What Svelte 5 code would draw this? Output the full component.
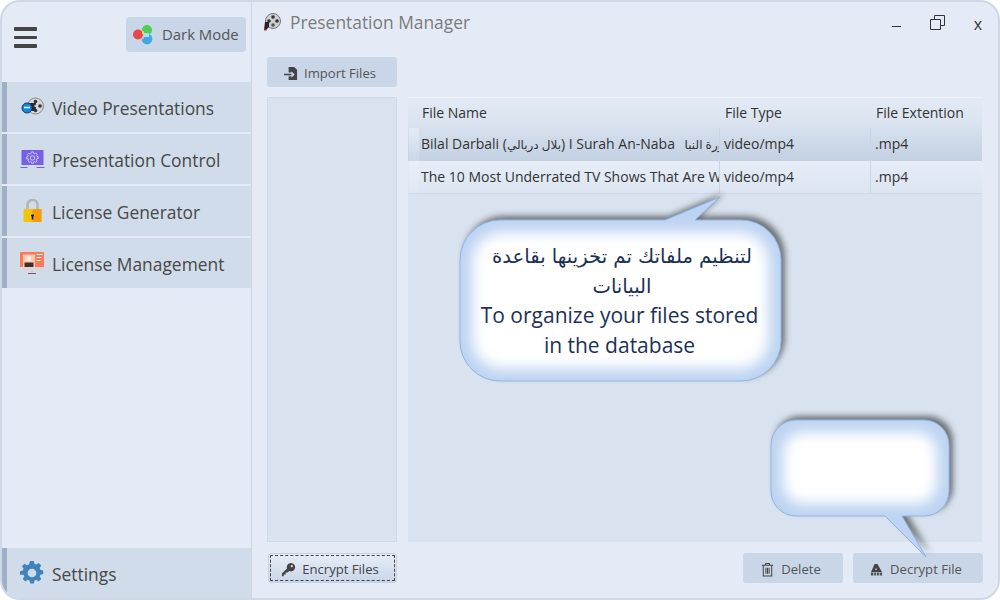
<script>
  const nav = [
    { id: 'video', label: 'Video Presentations' },
    { id: 'control', label: 'Presentation Control' },
    { id: 'lock', label: 'License Generator' },
    { id: 'monitor', label: 'License Management' }
  ];
  const bubbleA = 'M500 220 H665 L720 197 L695 220 H741 A40 40 0 0 1 781 260 V341 A40 40 0 0 1 741 381 H500 A40 40 0 0 1 460 341 V260 A40 40 0 0 1 500 220 Z';
  const bubbleB = 'M796 420 H924 A25 25 0 0 1 949 445 V491 A25 25 0 0 1 924 516 H902 L926 557 L885 516 H796 A25 25 0 0 1 771 491 V445 A25 25 0 0 1 796 420 Z';
  const gear = 'M10.3 1h3.4l.5 2.6 1.7.7 2.2-1.5 2.4 2.4-1.5 2.2.7 1.7 2.6.5v3.4l-2.6.5-.7 1.7 1.5 2.2-2.4 2.4-2.2-1.5-1.7.7-.5 2.6h-3.4l-.5-2.6-1.7-.7-2.2 1.5-2.4-2.4 1.5-2.2-.7-1.7L1 13.7v-3.4l2.6-.5.7-1.7-1.5-2.2 2.4-2.4 2.2 1.5 1.7-.7z';
</script>

<div class="window">
  <aside class="side">
    <div class="side-top">
      <div class="burger"><i></i><i></i><i></i></div>
      <button class="dark">
        <svg class="ic-dark" viewBox="0 0 20 20">
          <circle cx="5" cy="9.5" r="5" fill="#e8474c" />
          <circle cx="14" cy="5" r="5" fill="#4fce53" />
          <circle cx="14" cy="14" r="5.4" fill="#40a9e0" />
          <rect x="10" y="8" width="6" height="4" fill="#a8e4ee" />
          <rect x="9" y="11" width="2" height="3" fill="#f0a8c0" />
          <rect x="9" y="6" width="2" height="3" fill="#f2cf70" />
        </svg>
        <span class="dark-label">Dark Mode</span>
      </button>
    </div>
    <nav class="nav">
      {#each nav as item}
        <div class="item">
          <span class="ico">
            {#if item.id === 'video'}
              <svg class="ic" viewBox="0 0 24 24">
                <circle cx="15.5" cy="11" r="8" fill="#d6d6d6" stroke="#8a8a8a" />
                <rect x="8" y="8" width="8" height="8" fill="#2a2a30" />
                <circle cx="15.5" cy="6.5" r="1.8" fill="#333" />
                <circle cx="20" cy="11" r="1.8" fill="#333" />
                <circle cx="15.5" cy="15.5" r="1.8" fill="#333" />
                <circle cx="15.5" cy="11" r="1.2" fill="#ccc" />
                <circle cx="7" cy="13" r="5" fill="#1586d8" stroke="#0a3f78" />
                <path d="M4 12.5h6" stroke="#fff" stroke-width="1.4" />
              </svg>
            {:else if item.id === 'control'}
              <svg class="ic-wide" viewBox="0 0 26 24">
                <rect x="2.5" y="3" width="22" height="15" fill="#7560e8" />
                <path d="M1.5 20.5h7M17.5 20.5h8" stroke="#7560e8" stroke-width="1" />
                <g transform="translate(6.9 4.4) scale(.55)"><path d={gear} fill="none" stroke="#d0caf9" stroke-width="1.8" /><circle cx="12" cy="12" r="4" fill="none" stroke="#d0caf9" stroke-width="1.8" /></g>
              </svg>
            {:else if item.id === 'lock'}
              <svg class="ic" viewBox="0 0 24 24">
                <path d="M7.5 11V6a5 5 0 0 1 10 0v5" fill="none" stroke="#b5b5b5" stroke-width="2.6" />
                <rect x="3.5" y="10" width="18" height="13" fill="#f3c40c" />
                <rect x="12.5" y="10" width="9" height="13" fill="#f59e0c" />
                <path d="M12.5 15.5v5M11 16.5h3" stroke="#111" stroke-width="1.5" />
              </svg>
            {:else}
              <svg class="ic" viewBox="0 0 24 24">
                <rect x="0" y="1" width="24" height="15" fill="#fb7a55" />
                <rect x="0" y="16" width="24" height="4" fill="#d8d8d8" />
                <rect x="10.5" y="20" width="3" height="1.5" fill="#ccc" />
                <path d="M8 22.5h8" stroke="#8a4a6a" stroke-width="1" />
                <rect x="3" y="3.5" width="12" height="12.5" fill="#ffc8b2" />
                <rect x="6.5" y="5.5" width="4.5" height="4.5" fill="#fff0e8" />
                <rect x="4.5" y="11.5" width="9" height="4.5" fill="#4a2a2a" />
                <path d="M16.5 3.5h6M16.5 6.5h5M16.5 9.5h4" stroke="#fff" stroke-width="1" />
              </svg>
            {/if}
          </span>
          <span class="label">{item.label}</span>
        </div>
      {/each}
    </nav>
    <div class="item settings">
      <span class="ico">
        <svg class="ic" viewBox="1 1 22 22">
          <path d={gear} fill="#3f83bd" />
          <circle cx="12" cy="12" r="4" fill="#cfdbe9" />
        </svg>
      </span>
      <span class="label">Settings</span>
    </div>
  </aside>

  <main class="main">
    <header class="title">
      <svg class="ic-title" viewBox="0 0 18 18">
        <circle cx="10" cy="8" r="7.5" fill="#cfcfcf" stroke="#777" />
        <circle cx="10" cy="4" r="1.8" fill="#333" />
        <circle cx="14" cy="8" r="1.8" fill="#333" />
        <circle cx="6" cy="8" r="1.8" fill="#333" />
        <circle cx="10" cy="12" r="1.8" fill="#555" />
        <path d="M1 17l1-8h4v5l-3 3z" fill="#223" />
        <path d="M1 17h3" stroke="#c33" stroke-width="1.2" />
      </svg>
      <span class="title-text">Presentation Manager</span>
      <div class="controls">
        <span class="min"></span>
        <svg class="restore" viewBox="0 0 15 15">
          <path d="M4.5 4V.5h10v10H11M.5 4.5h10v10H.5z" fill="none" stroke="#333" />
        </svg>
        <span class="close">x</span>
      </div>
    </header>

    <div class="toolbar">
      <button class="btn import">
        <svg class="ic-btn" viewBox="0 0 16 16">
          <path d="M6 1h6l3 3v11H6v-4h3v1.5L12.5 9 9 5.5V7H6z" fill="#444" />
          <path d="M1 9h8" stroke="#444" stroke-width="1.6" />
        </svg>
        Import Files
      </button>
    </div>

    <div class="content">
      <div class="panel"></div>
      <div class="table">
        <div class="thead">
          <span class="corner"></span>
          <span class="th c1">File Name</span>
          <span class="th c2">File Type</span>
          <span class="th c3">File Extention</span>
        </div>
        <div class="tr sel">
          <span class="rowhead"></span>
          <span class="td c1"><span class="cell">Bilal Darbali (<span class="ar-run">بلال دربالي</span>) I Surah An-Naba <span class="ar-run gap">سورة النبا</span></span></span>
          <span class="td c2"><span class="cell">video/mp4</span></span>
          <span class="td c3"><span class="cell">.mp4</span></span>
        </div>
        <div class="tr">
          <span class="rowhead"></span>
          <span class="td c1"><span class="cell">The 10 Most Underrated TV Shows That Are Worth Watching</span></span>
          <span class="td c2"><span class="cell">video/mp4</span></span>
          <span class="td c3"><span class="cell">.mp4</span></span>
        </div>
      </div>
    </div>

    <footer class="footer">
      <div class="foot-left">
        <button class="btn encrypt">
          <svg class="ic-btn" viewBox="0 0 16 16">
            <path d="M10.5 1a4.5 4.5 0 1 1-1.8 8.6L7 11.3H5v2H3v2H1v-3l5.4-5.4A4.5 4.5 0 0 1 10.5 1z" fill="#444" />
            <circle cx="11.5" cy="4.5" r="1.2" fill="#dbe4f0" />
          </svg>
          Encrypt Files
        </button>
      </div>
      <div class="foot-right">
        <button class="btn del">
          <svg class="ic-btn" viewBox="0 0 14 16">
            <path d="M1 3.5h12M5 3.5V1.5h4v2M2.5 3.5V15h9V3.5M5.3 6v6.5M7 6v6.5M8.7 6v6.5" fill="none" stroke="#444" stroke-width="1.1" />
          </svg>
          Delete
        </button>
        <button class="btn dec">
          <svg class="ic-btn" viewBox="0 0 16 16">
            <path d="M2 11L6 2h3l5 9z" fill="#444" />
            <path d="M6.5 8.5h2L7.5 6z" fill="#c9d6e8" />
            <path d="M2 11.5h12v3H2z" fill="#555" />
            <path d="M5 11v4M8 11v4M11 11v4" stroke="#c9d6e8" stroke-width=".8" />
          </svg>
          Decrypt File
        </button>
      </div>
    </footer>
  </main>

  <div class="bubble bubble-a">
    <svg class="bubble-art" viewBox="450 190 345 200">
      <defs>
        <filter id="sh" x="-20%" y="-20%" width="140%" height="140%"><feGaussianBlur stdDeviation="3" /></filter>
        <filter id="gl" x="-20%" y="-20%" width="140%" height="140%"><feGaussianBlur stdDeviation="7" /></filter>
      </defs>
      <path d={bubbleA} fill="#333" opacity=".65" filter="url(#sh)" transform="translate(4 -4)" />
      <path d={bubbleA} fill="#bcd3f1" stroke="#8db3e6" />
      <rect x="472" y="232" width="297" height="137" rx="30" fill="#fff" filter="url(#gl)" />
    </svg>
    <div class="bubble-text">
      <div class="ar">لتنظيم ملفاتك تم تخزينها بقاعدة<br />البيانات</div>
      <div class="en">To organize your files stored<br />in the database</div>
    </div>
  </div>

  <div class="bubble bubble-b">
    <svg class="bubble-art" viewBox="760 410 200 155">
      <defs>
        <filter id="sh2" x="-20%" y="-20%" width="140%" height="140%"><feGaussianBlur stdDeviation="3" /></filter>
        <filter id="gl2" x="-20%" y="-20%" width="140%" height="140%"><feGaussianBlur stdDeviation="7" /></filter>
      </defs>
      <path d={bubbleB} fill="#333" opacity=".65" filter="url(#sh2)" transform="translate(4 -4)" />
      <path d={bubbleB} fill="#bcd3f1" stroke="#8db3e6" />
      <rect x="783" y="432" width="154" height="72" rx="20" fill="#fff" filter="url(#gl2)" />
    </svg>
  </div>
</div>

<style>
  :global(body) { margin: 0; background: #fff; }
  .window {
    position: relative;
    box-sizing: border-box;
    width: 1000px;
    height: 600px;
    display: flex;
    background: #e4ebf6;
    border: 2px solid #d0d8e5;
    border-radius: 20px;
    overflow: hidden;
    font-family: "Open Sans", "DejaVu Sans", sans-serif;
    color: #444;
  }
  .side {
    width: 249px;
    flex: none;
    display: flex;
    flex-direction: column;
    border-right: 1px solid #cdd7e4;
  }
  .side-top {
    height: 80px;
    display: flex;
    justify-content: space-between;
    align-items: flex-start;
    padding: 15px 5px 0 12px;
    box-sizing: border-box;
  }
  .burger { display: flex; flex-direction: column; gap: 5px; padding-top: 10px; }
  .burger i { display: block; width: 23px; height: 3.5px; background: #444; border-radius: 1px; }
  .dark {
    width: 120px;
    height: 35px;
    display: flex;
    align-items: center;
    gap: 9px;
    padding: 0 0 0 7px;
    border: none;
    border-radius: 4px;
    background: #c9d6e8;
    color: #555;
    font: 14.9px "Open Sans", sans-serif;
  }
  .dark-label { padding-bottom: 2px; }
  .ic-dark { width: 20px; height: 20px; }
  .nav { display: flex; flex-direction: column; gap: 2px; flex: 1; }
  .item {
    height: 50px;
    display: flex;
    align-items: center;
    background: #d0dce9;
    border-left: 5px solid #9fb0c6;
    font-size: 17.4px;
    color: #484848;
    box-sizing: border-box;
  }
  .label { padding-top: 1px; }
  .ico { width: 45px; display: flex; justify-content: center; padding-left: 4px; box-sizing: border-box; }
  .ic { width: 24px; height: 24px; }
  .ic-wide { width: 26px; height: 24px; }
  .main { flex: 1; position: relative; display: flex; flex-direction: column; padding: 0 16px 15px 15px; min-width: 0; }
  .title { height: 55px; flex: none; display: flex; align-items: flex-start; padding-top: 10px; box-sizing: border-box; margin-left: -4px; }
  .ic-title { width: 18px; height: 18px; margin-right: 9px; margin-top: 1px; }
  .title-text { font-size: 17.4px; color: #7b7b7b; line-height: 21px; }
  .controls { margin-left: auto; display: flex; align-items: flex-start; margin-right: 0; }
  .min { width: 9px; height: 1px; background: #333; margin-top: 14px; }
  .restore { width: 15px; height: 15px; margin-left: 29px; margin-top: 3px; }
  .close { margin-left: 29px; font-size: 16px; line-height: 24px; color: #333; }
  .toolbar { height: 30px; flex: none; margin-bottom: 10px; }
  .btn {
    height: 30px;
    display: flex;
    align-items: center;
    justify-content: center;
    gap: 6px;
    padding: 2px 5px 0 0;
    border: none;
    border-radius: 3px;
    background: #c9d6e8;
    color: #555;
    font: 13.1px "Open Sans", sans-serif;
  }
  .ic-btn { width: 15px; height: 15px; }
  .import { width: 130px; }
  .content { flex: 1; display: flex; gap: 11px; min-height: 0; }
  .panel { width: 128px; background: #d9e3ef; border: 1px solid #cfdae7; }
  .table { flex: 1; background: #d9e3ef; font-size: 14px; color: #333; }
  .thead { height: 31px; display: flex; align-items: center; background: linear-gradient(#e3eaf5, #d8e2ee); border-top: 1px solid #eef2f9; box-sizing: border-box; padding-bottom: 2px; }
  .corner { width: 10px; flex: none; }
  .c1 { width: 302px; flex: none; box-sizing: border-box; }
  .c2 { width: 151px; flex: none; box-sizing: border-box; }
  .c3 { flex: 1; box-sizing: border-box; }
  .th { padding-left: 5px; }
  .th.c1 { padding-left: 4px; }
  .tr { height: 33px; display: flex; align-items: stretch; background: linear-gradient(#e6edf7, #dce5f1); border-bottom: 1px solid #cfd9e6; box-sizing: border-box; }
  .tr.sel { background: linear-gradient(#d6e0ed, #c3d1e3); border-bottom: none; }
  .rowhead { width: 10px; flex: none; margin-left: 1px; background: linear-gradient(#eaf0f9, #dfe7f3); }
  .tr.sel .rowhead { background: linear-gradient(#e4ebf5, #cbd8e8); }
  .td { display: flex; align-items: center; padding: 0 0 2px 4px; overflow: hidden; border-right: 1px solid #c9d5e4; }
  .cell { white-space: pre; }
  .ar-run { font-size: 12px; }
  .gap { margin-left: 6px; }
  .td.c1 { margin-left: -1px; padding-left: 3px; }
  .td.c3 { border-right: none; }
  .footer { flex: none; height: 30px; margin-top: 11px; display: flex; justify-content: space-between; }
  .encrypt {
    width: 129px;
    margin-left: 1px;
    background: linear-gradient(#e8eef8, #c9d6e8);
    border: 1px solid #c6d2e2;
    outline: 1px dashed #444;
    outline-offset: -3px;
    box-sizing: border-box;
    color: #444;
  }
  .foot-right { display: flex; gap: 10px; margin-right: -1px; }
  .del { width: 100px; }
  .dec { width: 130px; }
  .bubble { position: absolute; }
  .bubble-art { position: absolute; left: 0; top: 0; width: 100%; height: 100%; }
  .bubble-a { left: 448px; top: 188px; width: 345px; height: 200px; }
  .bubble-b { left: 758px; top: 408px; width: 200px; height: 155px; }
  .bubble-text {
    position: absolute;
    left: 12px;
    top: 52px;
    width: 320px;
    text-align: center;
    font-size: 21px;
    line-height: 29.5px;
    color: #1b3158;
  }
  .ar { font-family: "DejaVu Sans", sans-serif; font-size: 19.6px; }
  .en { margin-left: -5px; }
</style>
